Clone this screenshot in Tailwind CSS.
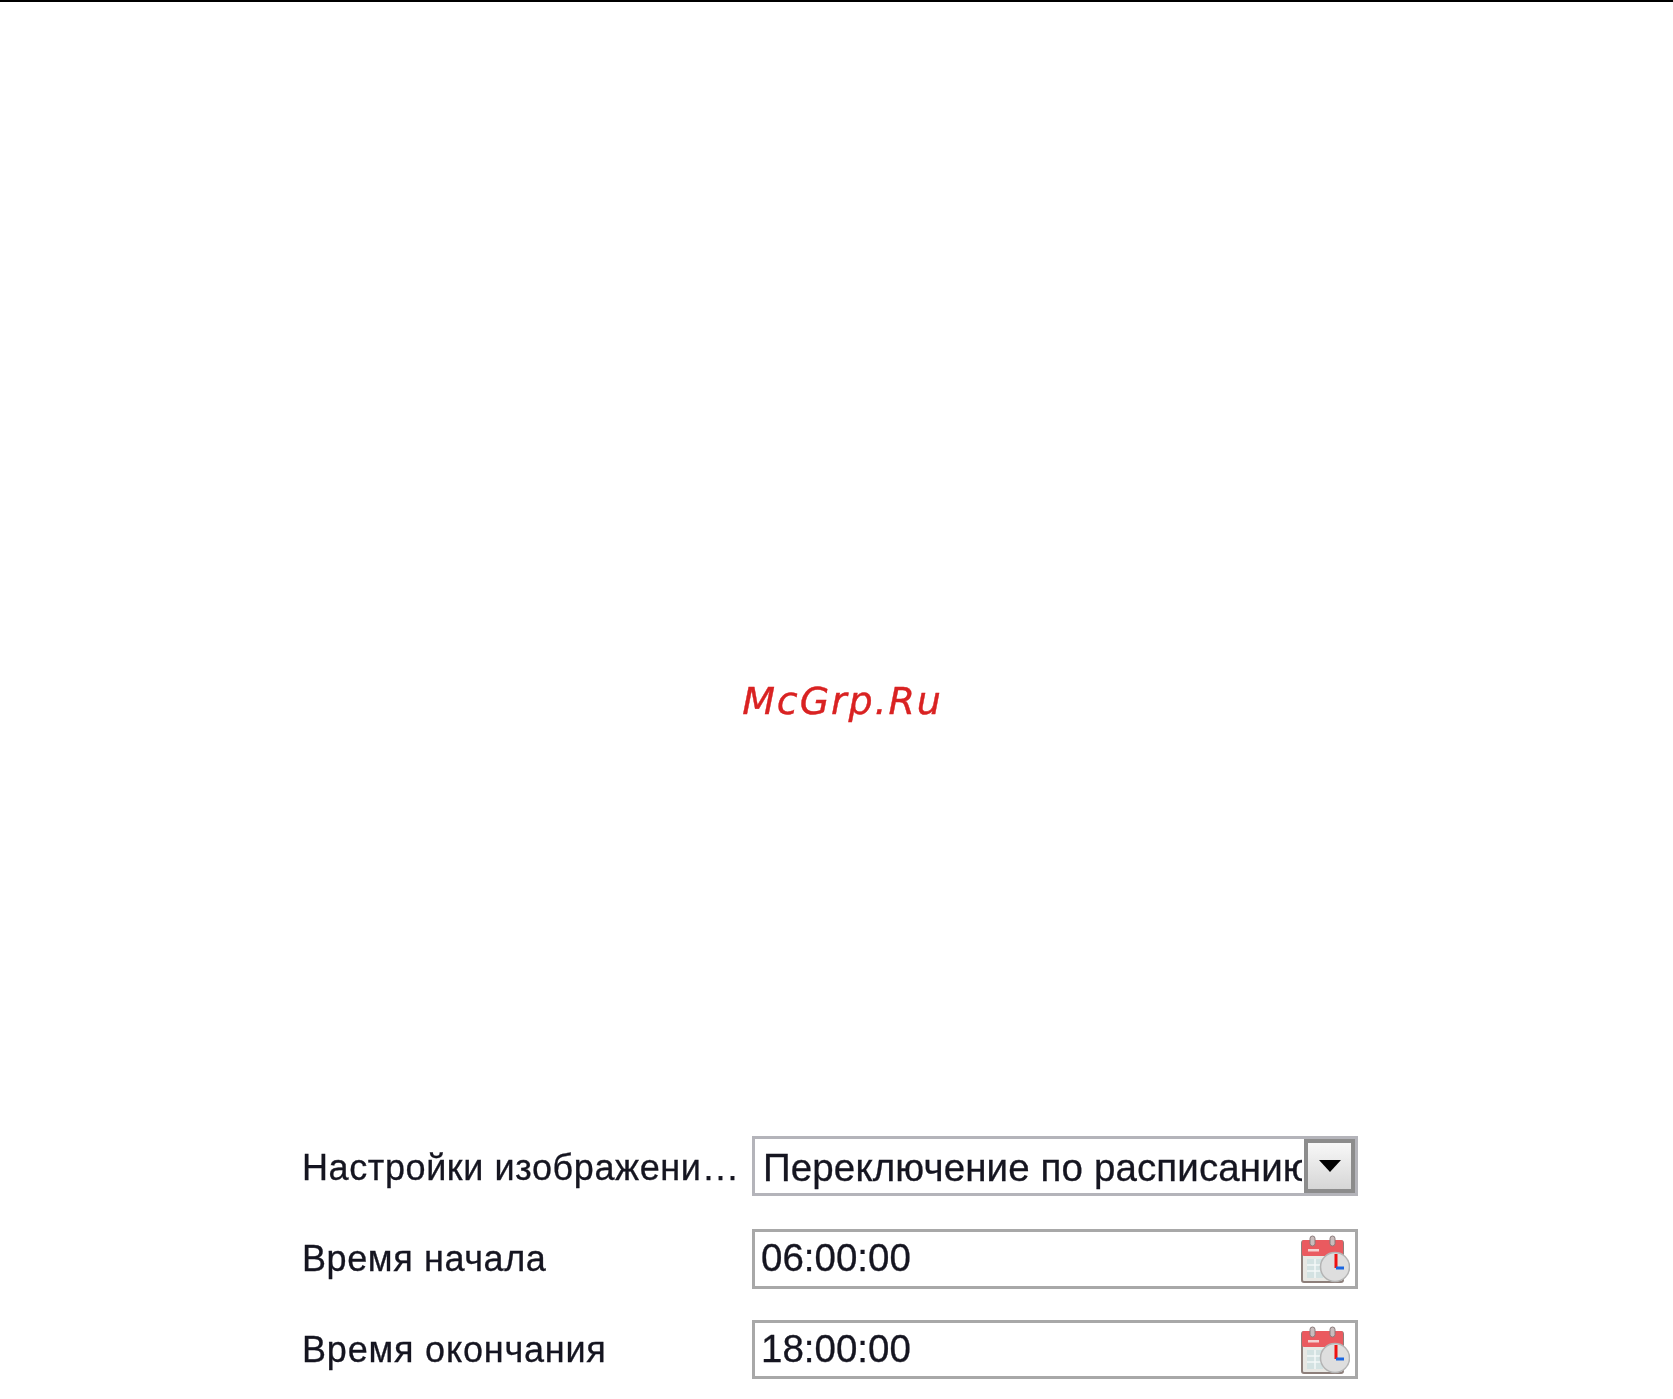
<!DOCTYPE html>
<html lang="ru">
<head>
<meta charset="utf-8">
<title>Настройки изображения</title>
<script src="https://cdn.jsdelivr.net/npm/@tailwindcss/browser@4"></script>
</head>
<body class="bg-white">
<div class="w-[1673px] h-[1399px] overflow-hidden flex flex-col font-['Liberation_Sans',Arial,sans-serif]">
  <div class="h-[2px] bg-black shrink-0"></div>
  <div class="mt-[675px] h-[48px] flex justify-center shrink-0 pl-[12px]">
    <span class="font-['DejaVu_Sans',sans-serif] italic text-[38px] leading-[48px] tracking-[1.9px] text-[#d92222] [-webkit-text-stroke:0.4px_#d92222] blur-[0.4px]">McGrp.Ru</span>
  </div>
  <div class="mt-[411px] ml-[302px] w-[1056px] grid grid-cols-[450px_606px] auto-rows-[60px] gap-y-[32px] text-[#151520] text-[36px] [-webkit-text-stroke:0.3px_#151520] blur-[0.6px]">
    <div class="flex items-center pt-[4px] tracking-[0.6px]">Настройки изображени<span class="ml-[2px] tracking-[2px]">...</span></div>
    <div class="relative border-[3px] border-[#b4b4ba] bg-white flex items-center overflow-hidden text-[38.5px] tracking-[0.12px]">
      <div class="pl-[8px] pt-[3px] w-[547px] overflow-hidden whitespace-nowrap">Переключение по расписанию</div>
      <div class="absolute right-0 inset-y-0 w-[51px] border-[4px] border-[#8c8c8c] bg-gradient-to-b from-[#f8f8f8] to-[#d6d6d6] flex items-center justify-center">
        <svg width="22" height="12" viewBox="0 0 22 12"><path d="M0 0h22L11 12z" fill="#000"/></svg>
      </div>
    </div>
    <div class="flex items-center mt-px tracking-[0.6px]">Время начала</div>
    <div class="mt-px h-[60px] border-[3px] border-[#a8a8a8] bg-white flex items-center justify-between pl-[6px] pr-[5px] text-[38.5px]">
      <span class="pb-[2px]">06:00:00</span>
      <svg width="49" height="48" viewBox="0 0 49 48">
        <rect x="1" y="6" width="41" height="41" rx="2" fill="#e8e8e4" stroke="#8d7f7a" stroke-width="2"/>
        <rect x="1" y="5" width="41" height="16" rx="2" fill="#ea5a5f"/>
        <rect x="7" y="14" width="11" height="2.500" fill="#f5d0d0"/>
        <rect x="9" y="1" width="5" height="10" rx="2.500" fill="#c9bcbc" stroke="#8a7a7a"/>
        <rect x="29" y="1" width="5" height="10" rx="2.500" fill="#c9bcbc" stroke="#8a7a7a"/>
        <rect x="6" y="24" width="16" height="19" fill="#d3e2e2"/>
        <path d="M6 30h16M6 36h16M14 24v19" stroke="#f4f8f8" stroke-width="1.500"/>
        <circle cx="34" cy="32" r="14.500" fill="#dedede" stroke="#b4b4b4" stroke-width="1.500"/>
        <path d="M35 19v14" stroke="#ee1111" stroke-width="3"/>
        <path d="M35 33h8" stroke="#1a66e0" stroke-width="3"/>
      </svg>
    </div>
    <div class="flex items-center tracking-[0.8px]">Время окончания</div>
    <div class="h-[59px] border-[3px] border-[#a8a8a8] bg-white flex items-center justify-between pl-[6px] pr-[5px] text-[38.5px]">
      <span class="pb-[2px]">18:00:00</span>
      <svg width="49" height="48" viewBox="0 0 49 48">
        <rect x="1" y="6" width="41" height="41" rx="2" fill="#e8e8e4" stroke="#8d7f7a" stroke-width="2"/>
        <rect x="1" y="5" width="41" height="16" rx="2" fill="#ea5a5f"/>
        <rect x="7" y="14" width="11" height="2.500" fill="#f5d0d0"/>
        <rect x="9" y="1" width="5" height="10" rx="2.500" fill="#c9bcbc" stroke="#8a7a7a"/>
        <rect x="29" y="1" width="5" height="10" rx="2.500" fill="#c9bcbc" stroke="#8a7a7a"/>
        <rect x="6" y="24" width="16" height="19" fill="#d3e2e2"/>
        <path d="M6 30h16M6 36h16M14 24v19" stroke="#f4f8f8" stroke-width="1.500"/>
        <circle cx="34" cy="32" r="14.500" fill="#dedede" stroke="#b4b4b4" stroke-width="1.500"/>
        <path d="M35 19v14" stroke="#ee1111" stroke-width="3"/>
        <path d="M35 33h8" stroke="#1a66e0" stroke-width="3"/>
      </svg>
    </div>
  </div>
</div>
</body>
</html>
